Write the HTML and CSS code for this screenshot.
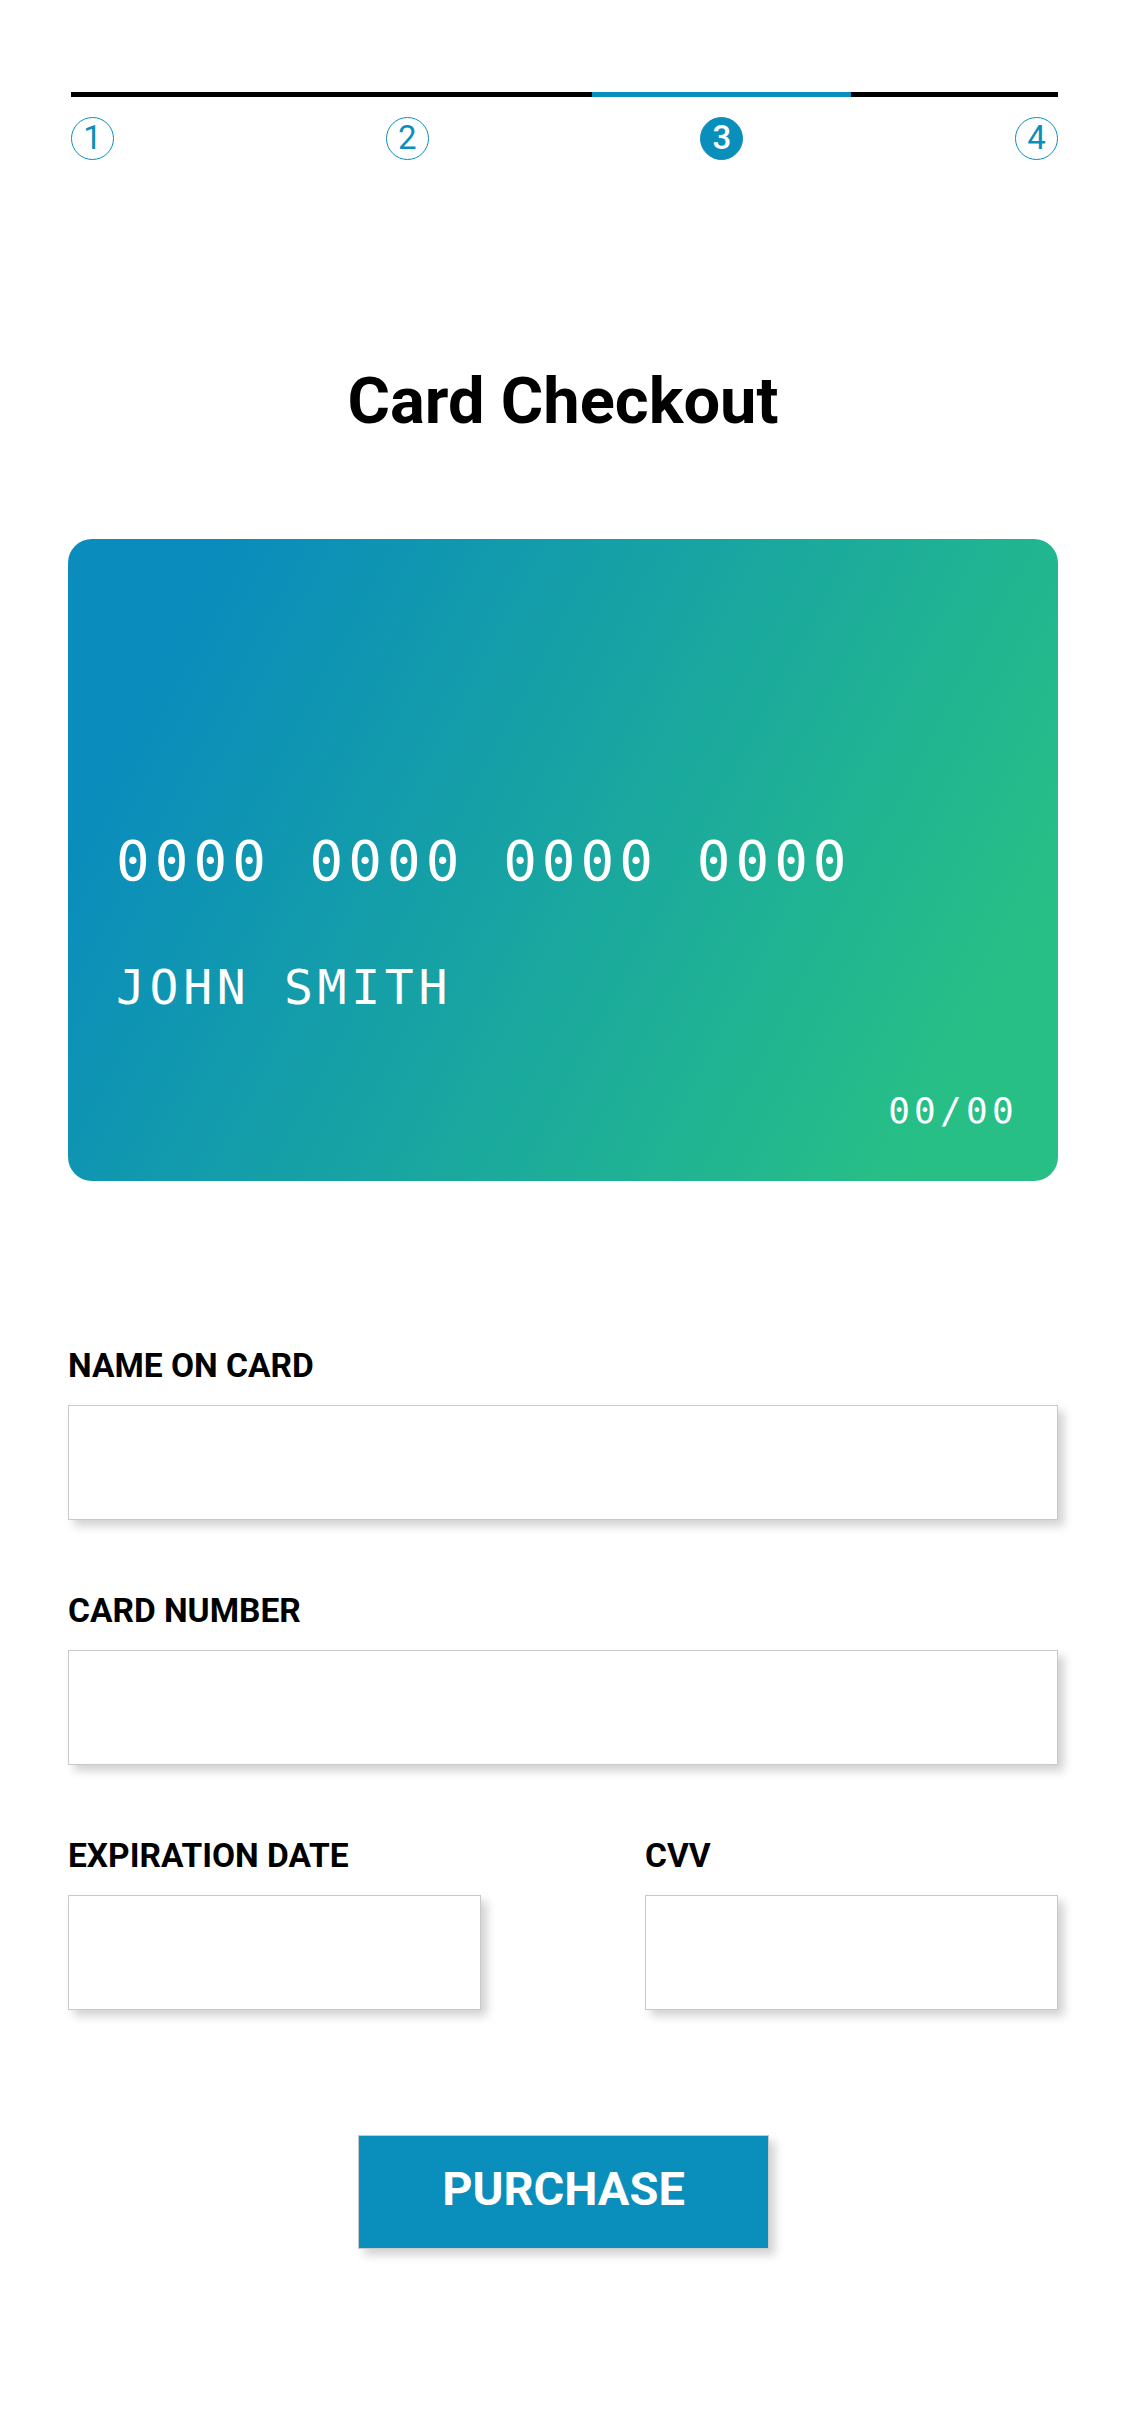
FILE: index.html
```html
<!DOCTYPE html>
<html lang="en">
<head>
<meta charset="utf-8">
<title>Card Checkout</title>
<link rel="stylesheet" href="styles.css">
</head>
<body>
<div class="page">
  <div class="progress">
    <div class="bar">
      <span class="seg seg-done"></span>
      <span class="seg seg-current"></span>
      <span class="seg seg-rest"></span>
    </div>
    <div class="steps">
      <span class="step">1</span>
      <span class="step">2</span>
      <span class="step step-active">3</span>
      <span class="step">4</span>
    </div>
  </div>

  <h1 class="title">Card Checkout</h1>

  <div class="card">
    <div class="card-number">0000 0000 0000 0000</div>
    <div class="card-name">JOHN SMITH</div>
    <div class="card-exp">00/00</div>
  </div>

  <form class="form">
    <div class="field">
      <label class="label">NAME ON CARD</label>
      <div class="input"></div>
    </div>
    <div class="field">
      <label class="label">CARD NUMBER</label>
      <div class="input"></div>
    </div>
    <div class="row">
      <div class="field">
        <label class="label">EXPIRATION DATE</label>
        <div class="input"></div>
      </div>
      <div class="field">
        <label class="label">CVV</label>
        <div class="input"></div>
      </div>
    </div>
    <div class="actions">
      <button type="button" class="btn">PURCHASE</button>
    </div>
  </form>
</div>
</body>
</html>
```

FILE: styles.css
```css
html, body {
  margin: 0;
  padding: 0;
  background: #ffffff;
}

body {
  font-family: Roboto, "Liberation Sans", sans-serif;
  color: #000;
}

.page {
  width: 1125px;
  box-sizing: border-box;
  padding: 92px 67px 180px 68px;
}

/* progress */
.progress {
  margin: 0 0 0 3px;
  width: 987px;
}

.bar {
  display: flex;
  height: 5px;
}

.seg { display: block; height: 5px; }
.seg-done { width: 521px; background: #000; }
.seg-current { width: 259px; background: #0a8fbc; }
.seg-rest { flex: 1; background: #000; }

.steps {
  display: flex;
  justify-content: space-between;
  margin-top: 20px;
}

.step {
  width: 43px;
  height: 43px;
  box-sizing: border-box;
  border: 1.5px solid #0a8fbc;
  border-radius: 50%;
  color: #0a8fbc;
  font-size: 33px;
  font-weight: 400;
  line-height: 40px;
  text-align: center;
}

.step-active {
  background: #0a8fbc;
  color: #fff;
  font-weight: 500;
}

/* title */
.title {
  margin: 204px 0 0;
  font-size: 65px;
  font-weight: 700;
  line-height: 75px;
  text-align: center;
}

/* card */
.card {
  margin-top: 100px;
  height: 642px;
  box-sizing: border-box;
  border-radius: 24px;
  background: linear-gradient(118deg, #0a8cbc 12%, #27bf86 88%);
  padding: 290px 40px 50px 48px;
  color: #fff;
  font-family: "DejaVu Sans Mono", "Liberation Mono", monospace;
  display: flex;
  flex-direction: column;
}

.card-number {
  font-size: 56px;
  line-height: 64px;
  letter-spacing: 5px;
}

.card-name {
  margin-top: 66px;
  font-size: 48px;
  line-height: 56px;
  letter-spacing: 4.7px;
}

.card-exp {
  margin-top: 76px;
  font-size: 36px;
  line-height: 40px;
  letter-spacing: 4.3px;
  align-self: flex-end;
}

/* form */
.form {
  margin: 165px 0 0;
  display: flex;
  flex-direction: column;
  gap: 71px;
}

.field {
  display: flex;
  flex-direction: column;
  gap: 19px;
}

.label {
  font-size: 33.5px;
  font-weight: 700;
  line-height: 40px;
}

.input {
  height: 115px;
  box-sizing: border-box;
  border: 1.5px solid #c9c9c9;
  background: #fff;
  box-shadow: 6px 6px 9px rgba(0, 0, 0, 0.18);
}

.row {
  display: grid;
  grid-template-columns: 1fr 1fr;
  column-gap: 164px;
}

.actions {
  display: flex;
  justify-content: center;
  margin-top: 54px;
}

.btn {
  width: 411px;
  height: 114px;
  border: 1px solid #c9c9c9;
  background: #0a8fbc;
  color: #fff;
  font-family: Roboto, "Liberation Sans", sans-serif;
  font-size: 47px;
  font-weight: 700;
  box-shadow: 6px 6px 9px rgba(0, 0, 0, 0.18);
  padding: 0 0 7px;
  margin-left: 1px;
}
```
